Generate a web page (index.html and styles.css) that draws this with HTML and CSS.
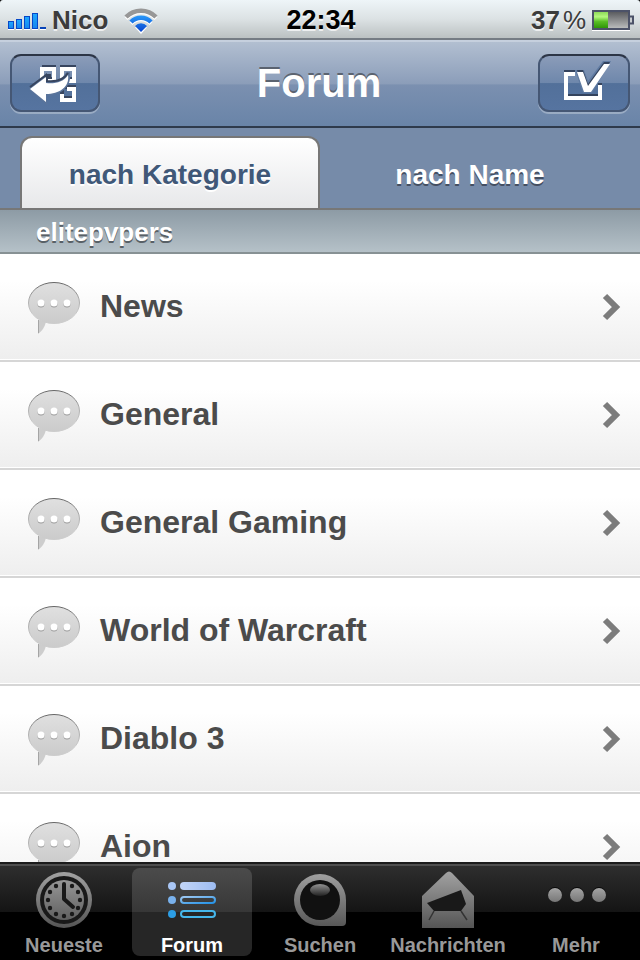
FILE: index.html
```html
<!DOCTYPE html>
<html lang="de">
<head>
  <meta charset="UTF-8">
  <meta name="viewport" content="width=device-width, initial-scale=1.0">
  <title>Forum</title>
  <link rel="stylesheet" href="styles.css">
</head>
<body>
  <!-- shared gradients and row icons -->
  <svg class="defs" width="0" height="0" aria-hidden="true">
    <defs>
      <linearGradient id="gSignal" x1="0" y1="0" x2="0" y2="1"><stop offset="0" stop-color="#1fa9ff"/><stop offset="1" stop-color="#1685ee"/></linearGradient>
      <linearGradient id="gWifi" gradientUnits="userSpaceOnUse" x1="0" y1="9" x2="0" y2="26"><stop offset="0" stop-color="#2a9bfa"/><stop offset="1" stop-color="#0845cf"/></linearGradient>
      <linearGradient id="gBattery" x1="0" y1="0" x2="0" y2="1"><stop offset="0" stop-color="#55565a"/><stop offset=".5" stop-color="#8a8b8d"/><stop offset="1" stop-color="#bfc1c1"/></linearGradient>
      <linearGradient id="gCharge" x1="0" y1="0" x2="0" y2="1"><stop offset="0" stop-color="#8ed95a"/><stop offset=".3" stop-color="#b4f77e"/><stop offset=".6" stop-color="#58bd24"/><stop offset="1" stop-color="#2f9508"/></linearGradient>
      <linearGradient id="gBubble" x1="0" y1="0" x2="0" y2="1"><stop offset="0" stop-color="#e0e0e0"/><stop offset="1" stop-color="#cbcbcb"/></linearGradient>
      <linearGradient id="gBubbleEdge" x1="0" y1="0" x2="0" y2="1"><stop offset="0" stop-color="#666"/><stop offset=".4" stop-color="#aaa"/><stop offset=".8" stop-color="#ccc"/></linearGradient>
      <linearGradient id="gTab" gradientUnits="userSpaceOnUse" x1="0" y1="0" x2="0" y2="58"><stop offset="0" stop-color="#a4a4a4"/><stop offset="1" stop-color="#555"/></linearGradient>
      <linearGradient id="gDot" x1="0" y1="0" x2="0" y2="1"><stop offset="0" stop-color="#a4a4a4"/><stop offset="1" stop-color="#777"/></linearGradient>
      <linearGradient id="gGloss" x1="0" y1="0" x2="0" y2="1"><stop offset="0" stop-color="#929292"/><stop offset="1" stop-color="#222"/></linearGradient>
      <linearGradient id="gBar1" x1="0" y1="0" x2="1" y2="0"><stop offset="0" stop-color="#c2d5f8"/><stop offset="1" stop-color="#9dbcf2"/></linearGradient>
      <linearGradient id="gBar2" x1="0" y1="0" x2="1" y2="1"><stop offset="0" stop-color="#9cc7f1"/><stop offset="1" stop-color="#2492e6"/></linearGradient>
    </defs>
    <symbol id="bubble" viewBox="0 0 56 58">
      <path d="M12 42V56C16 53 19 49 20 43Z" fill="#cdcdcd"/>
      <path d="M12.500 42V55" stroke="#a5a5a5"/>
      <ellipse cx="28" cy="25" rx="25.500" ry="20.500" fill="url(#gBubble)" stroke="url(#gBubbleEdge)"/>
      <g fill="#999"><circle cx="15" cy="26" r="3.500"/><circle cx="28" cy="26" r="3.500"/><circle cx="41" cy="26" r="3.500"/></g>
      <g fill="#fff"><circle cx="15" cy="25" r="3.500"/><circle cx="28" cy="25" r="3.500"/><circle cx="41" cy="25" r="3.500"/></g>
    </symbol>
    <symbol id="chevron" viewBox="0 0 20 28">
      <path d="M3 3L14 14L3 25" fill="none" stroke="#7c7c7c" stroke-width="6"/>
    </symbol>
  </svg>

  <div class="status-bar">
    <div class="status-left">
      <svg width="40" height="20" viewBox="0 0 40 20" aria-hidden="true">
        <g fill="#fff"><rect x="0" y="19" width="6" height="1"/><rect x="8" y="19" width="6" height="1"/><rect x="16" y="19" width="6" height="1"/><rect x="24" y="19" width="6" height="1"/><rect x="32" y="19" width="6" height="1"/></g>
        <g fill="url(#gSignal)" stroke="#0647c8">
          <rect x=".5" y="11.500" width="5" height="7"/>
          <rect x="8.500" y="9.500" width="5" height="9"/>
          <rect x="16.500" y="6.500" width="5" height="12"/>
          <rect x="24.500" y="3.500" width="5" height="15"/>
        </g>
        <rect x="32" y="17" width="6" height="2" fill="#0743b8"/>
      </svg>
      <span class="carrier">Nico</span>
      <svg width="34" height="28" viewBox="0 0 34 28" aria-hidden="true">
        <g fill="none" stroke="#fff" stroke-width="4">
          <path d="M2 12.500A21 21 0 0 1 32 12.500"/>
          <path d="M7 17.500A14 14 0 0 1 27 17.500"/>
        </g>
        <path d="M11 21.500A8 8 0 0 1 23 21.500L17 28Z" fill="#fff"/>
        <path d="M2 11A21 21 0 0 1 32 11" fill="none" stroke="#979797" stroke-width="4.500"/>
        <path d="M7 16A14 14 0 0 1 27 16" fill="none" stroke="url(#gWifi)" stroke-width="4.500"/>
        <path d="M11 20A8 8 0 0 1 23 20L17 26Z" fill="url(#gWifi)"/>
      </svg>
    </div>
    <div class="clock">22:34</div>
    <div class="status-right">
      <span class="percent">37<span class="percent-sign">%</span></span>
      <svg width="42" height="21" viewBox="0 0 42 21" aria-hidden="true">
        <path d="M0 20.500H38" stroke="#fff"/>
        <path d="M38 6.500H41V13.500H38" fill="#c9cdd0" stroke="#4c5268" stroke-width="2"/>
        <rect x="1" y="1" width="36" height="18" fill="url(#gBattery)" stroke="#4c5268" stroke-width="2"/>
        <rect x="2" y="2" width="14" height="16" fill="url(#gCharge)"/>
      </svg>
    </div>
  </div>

  <div class="header">
    <button class="header-btn" aria-label="Forum wechseln">
      <svg width="48" height="40" viewBox="0 0 48 40" aria-hidden="true">
        <g fill="none" stroke="#37455f" stroke-width="4">
          <path d="M11 4H23V16H18V11M11 4V16M31 4H43V16H31ZM31 24H43V35H31Z"/>
        </g>
        <g fill="none" stroke="#fff" stroke-width="4">
          <path d="M11 20V6H23V18H17M31 18V6H43V18H36M31 39V37H43V26H36M31 39V31"/>
        </g>
        <path d="M-1 26L15 13V20C24 20 32 17 36 10H38C40 24 29 31 15 32V40Z" fill="#5a749b" stroke="#5a749b" stroke-width="2"/>
        <path d="M-1 24L15 12V18C24 19 33 17 37 10" fill="none" stroke="#37455f" stroke-width="2"/>
        <path d="M-1 26L15 14V20C24 21 33 19 37 12C39 24 28 31 15 31V39Z" fill="#fff"/>
      </svg>
    </button>
    <h1>Forum</h1>
    <button class="header-btn mark-btn" aria-label="Alle als gelesen markieren">
      <svg width="52" height="40" viewBox="0 0 52 40" aria-hidden="true">
        <path d="M17 9H8V33H42V20" fill="none" stroke="#34435d" stroke-width="4"/>
        <path d="M17 11H8V35H42V22" fill="none" stroke="#fff" stroke-width="4"/>
        <path d="M17 7H26L30 18L45 -2H53L34 30H25Z" fill="#5f7aa1"/>
        <path d="M19 7H25L30 21L46 -1H52L33 27H26Z" fill="#34435d"/>
        <path d="M19 9H25L30 23L46 1H52L33 29H26Z" fill="#fff"/>
      </svg>
    </button>
  </div>

  <div class="tabs">
    <button class="tab active">nach Kategorie</button>
    <button class="tab">nach Name</button>
  </div>

  <h2 class="section-title">elitepvpers</h2>

  <div class="forum-list">
    <a class="forum-row" href="#news">
      <svg class="bubble" aria-hidden="true"><use href="#bubble"/></svg>
      <span>News</span>
      <svg class="chevron" aria-hidden="true"><use href="#chevron"/></svg>
    </a>
    <a class="forum-row" href="#general">
      <svg class="bubble" aria-hidden="true"><use href="#bubble"/></svg>
      <span>General</span>
      <svg class="chevron" aria-hidden="true"><use href="#chevron"/></svg>
    </a>
    <a class="forum-row" href="#gaming">
      <svg class="bubble" aria-hidden="true"><use href="#bubble"/></svg>
      <span>General Gaming</span>
      <svg class="chevron" aria-hidden="true"><use href="#chevron"/></svg>
    </a>
    <a class="forum-row" href="#wow">
      <svg class="bubble" aria-hidden="true"><use href="#bubble"/></svg>
      <span>World of Warcraft</span>
      <svg class="chevron" aria-hidden="true"><use href="#chevron"/></svg>
    </a>
    <a class="forum-row" href="#diablo">
      <svg class="bubble" aria-hidden="true"><use href="#bubble"/></svg>
      <span>Diablo 3</span>
      <svg class="chevron" aria-hidden="true"><use href="#chevron"/></svg>
    </a>
    <a class="forum-row" href="#aion">
      <svg class="bubble" aria-hidden="true"><use href="#bubble"/></svg>
      <span>Aion</span>
      <svg class="chevron" aria-hidden="true"><use href="#chevron"/></svg>
    </a>
  </div>

  <nav class="footer">
    <a class="footer-item" href="#neueste">
      <svg width="60" height="60" viewBox="0 0 60 60" aria-hidden="true">
        <circle cx="30" cy="30" r="28" fill="url(#gTab)"/>
        <circle cx="30" cy="30" r="24" fill="#191919"/>
        <circle cx="30" cy="30" r="20" fill="url(#gTab)"/>
        <g fill="#191919">
          <circle cx="38" cy="16" r="2.200"/><circle cx="44" cy="22" r="2.200"/><circle cx="46" cy="30" r="2.200"/>
          <circle cx="44" cy="38" r="2.200"/><circle cx="38" cy="44" r="2.200"/><circle cx="30" cy="46" r="2.200"/>
          <circle cx="22" cy="44" r="2.200"/><circle cx="16" cy="38" r="2.200"/><circle cx="14" cy="30" r="2.200"/>
          <circle cx="16" cy="22" r="2.200"/><circle cx="22" cy="16" r="2.200"/>
        </g>
        <path d="M30 14V29L39 37" fill="none" stroke="#191919" stroke-width="4" stroke-linecap="round" stroke-linejoin="round"/>
      </svg>
      <span>Neueste</span>
    </a>
    <a class="footer-item selected" href="#forum">
      <svg width="60" height="60" viewBox="0 0 60 60" aria-hidden="true">
        <circle cx="10" cy="16" r="4" fill="#a9c6f5"/>
        <rect x="18" y="12" width="36" height="8" rx="4" fill="url(#gBar1)"/>
        <circle cx="10" cy="30" r="4" fill="#79b1ec"/>
        <rect x="19" y="27" width="34" height="6" rx="3" fill="none" stroke="url(#gBar2)" stroke-width="2"/>
        <circle cx="10" cy="44" r="4" fill="#2c9ee5"/>
        <rect x="19" y="41" width="34" height="6" rx="3" fill="none" stroke="#45b7eb" stroke-width="2"/>
      </svg>
      <span>Forum</span>
    </a>
    <a class="footer-item" href="#suchen">
      <svg width="60" height="60" viewBox="0 0 60 60" aria-hidden="true">
        <path d="M30 4A26 26 0 0 1 56 30V52Q56 56 52 56H30A26 26 0 0 1 30 4Z" fill="url(#gTab)"/>
        <circle cx="30" cy="30" r="20" fill="#111"/>
        <ellipse cx="30" cy="20" rx="10" ry="6" fill="url(#gGloss)"/>
      </svg>
      <span>Suchen</span>
    </a>
    <a class="footer-item" href="#nachrichten">
      <svg width="60" height="60" viewBox="0 0 60 60" aria-hidden="true">
        <path d="M4 26L28 3Q31 0 34 3L56 26V58H4Z" fill="url(#gTab)"/>
        <path d="M9 33L43 20L48 34L43 41H16Z" fill="#191919"/>
        <path d="M16 41L11 50M43 41L49 50" stroke="#333" stroke-width="1.500"/>
      </svg>
      <span>Nachrichten</span>
    </a>
    <a class="footer-item" href="#mehr">
      <svg width="60" height="60" viewBox="0 0 60 60" aria-hidden="true">
        <g fill="#080808"><circle cx="9" cy="24" r="7"/><circle cx="31" cy="24" r="7"/><circle cx="53" cy="24" r="7"/></g>
        <g fill="url(#gDot)"><circle cx="9" cy="25" r="7"/><circle cx="31" cy="25" r="7"/><circle cx="53" cy="25" r="7"/></g>
      </svg>
      <span>Mehr</span>
    </a>
  </nav>
</body>
</html>
```

FILE: styles.css
```css
* {
  box-sizing: border-box;
}

body {
  margin: 0;
  height: 100vh;
  display: flex;
  flex-direction: column;
  overflow: hidden;
  background-color: #000;
  font-family: "Liberation Sans", Arial, sans-serif;
  font-weight: bold;
}

svg {
  display: block;
  flex-shrink: 0;
  overflow: visible;
}

.defs {
  position: absolute;
}

button {
  font: inherit;
  cursor: pointer;
}

/* status bar */
.status-bar {
  display: grid;
  grid-template-columns: 1fr auto 1fr;
  align-items: center;
  flex-shrink: 0;
  height: 40px;
  padding: 2px 6px 0 8px;
  background: linear-gradient(#eef5f8, #dce2e4 50%, #bbc1c2);
  border-bottom: 2px solid #757c84;
  border-radius: 3px 3px 0 0;
  color: #3c3c3c;
  font-size: 26px;
  text-shadow: 0 2px 0 rgba(255, 255, 255, 0.7);
}

.status-left,
.status-right {
  display: flex;
  align-items: center;
}

.status-left {
  gap: 4px;
}

.carrier {
  margin-right: 12px;
}

.clock {
  color: #000;
  font-size: 27px;
}

.status-right {
  justify-content: flex-end;
  gap: 6px;
}

.percent {
  display: flex;
  gap: 3px;
}

.percent-sign {
  font-weight: normal;
}

/* header */
.header {
  display: flex;
  align-items: center;
  justify-content: space-between;
  flex-shrink: 0;
  height: 88px;
  padding: 0 10px 2px;
  background: linear-gradient(#b2bfd1, #8b9db9 50%, #7b90b0 51%, #6984a8);
  border-top: 2px solid #c6d0de;
  border-bottom: 2px solid #2e3a4c;
}

.header h1 {
  margin: 0;
  color: #fff;
  font-size: 40px;
  line-height: 44px;
  text-shadow: 0 -2px 0 #5b6370;
}

.header-btn {
  display: flex;
  align-items: center;
  justify-content: center;
  width: 90px;
  height: 58px;
  padding: 0;
  border: 2px solid #455774;
  border-top-color: #2c3546;
  border-radius: 11px;
  background: linear-gradient(#8b9cb9, #6e87ab 50%, #52709a 51%, #5674a0);
  box-shadow: 0 2px 0 rgba(255, 255, 255, 0.3);
}

.mark-btn {
  width: 92px;
}

/* tabs */
.tabs {
  display: flex;
  flex-shrink: 0;
  height: 80px;
  padding: 8px 20px 0;
  background-color: #768ba9;
}

.tab {
  flex: 1;
  padding: 4px 0 0;
  border: 2px solid transparent;
  border-bottom: none;
  border-radius: 12px 12px 0 0;
  background: none;
  color: #fff;
  font-size: 28px;
  text-shadow: 0 2px 0 #444f62;
}

.tab.active {
  border-color: #777;
  background: linear-gradient(#fff, #e7e8ea);
  color: #405878;
  text-shadow: 0 2px 0 #fff;
}

.section-title {
  flex-shrink: 0;
  margin: 0;
  padding: 2px 36px 0;
  border-top: 2px solid #777;
  border-bottom: 2px solid #879194;
  background: linear-gradient(#8d9ba5, #b5c1c8);
  color: #fff;
  font-size: 26px;
  line-height: 40px;
  text-shadow: 0 2px 0 #586066;
}

/* forum list */
.forum-list {
  flex: 1;
  min-height: 0;
  overflow: hidden;
  background-color: #fff;
}

.forum-row {
  display: flex;
  align-items: center;
  gap: 18px;
  height: 108px;
  padding: 0 18px 0 26px;
  border-bottom: 2px solid #d6d6d6;
  background: linear-gradient(#fff 25%, #eee);
  box-shadow: inset 0 -1px 0 #fff;
  color: #4b4b4b;
  font-size: 32px;
  line-height: 30px;
  text-decoration: none;
}

.forum-row span {
  flex: 1;
  margin-bottom: 2px;
}

.bubble {
  width: 56px;
  height: 58px;
}

.chevron {
  width: 20px;
  height: 28px;
}

/* footer */
.footer {
  display: flex;
  flex-shrink: 0;
  gap: 8px;
  height: 98px;
  padding: 4px;
  border-top: 2px solid #1b1b1b;
  background: linear-gradient(#4e4e4e 2px, #2e2e2e 2px, #141414 48px, #000 48px);
}

.footer-item {
  flex: 1;
  display: flex;
  flex-direction: column;
  align-items: center;
  padding-top: 2px;
  border-radius: 8px;
  color: #999;
  font-size: 20px;
  text-decoration: none;
  line-height: 30px;
}

.footer-item.selected {
  background: linear-gradient(#4b4b4b, #373737 44px, #262626 44px);
  color: #fff;
}
```
